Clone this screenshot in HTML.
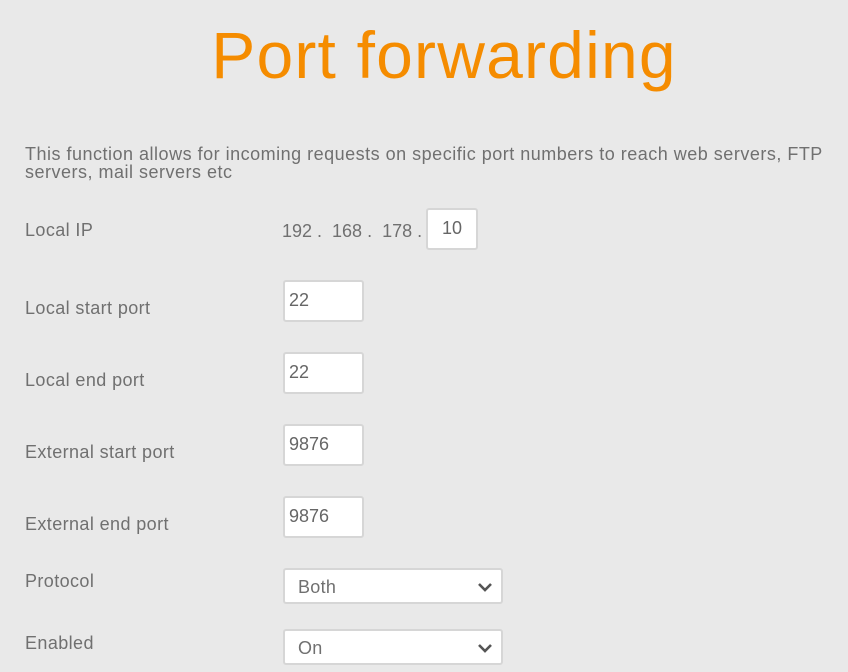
<!DOCTYPE html>
<html><head><meta charset="utf-8"><style>
body{margin:0;width:848px;height:672px;background:#e9e9e9;font-family:"Liberation Sans",sans-serif;color:#707070;position:relative;overflow:hidden}
.a{position:absolute;white-space:nowrap}
h1{position:absolute;left:0;width:888px;top:15px;margin:0;text-align:center;font-weight:normal;font-size:66px;color:#f58c00;line-height:80px;letter-spacing:1.2px}
.d{position:absolute;left:25px;top:145px;width:815px;font-size:18px;line-height:18px;letter-spacing:0.5px}
.l{font-size:18px;letter-spacing:0.4px}
.in{position:absolute;background:#fff;border:2px solid #d6d6d6;border-radius:3px;box-sizing:border-box;font-size:18px;color:#666;padding:8px 0 0 4px}
.sel{position:absolute;background:#fff;border:2px solid #d6d6d6;border-radius:3px;box-sizing:border-box;width:220px;height:36px;left:283px;font-size:18px;padding:7px 0 0 13px;letter-spacing:0.3px}
.sel svg{position:absolute;right:8px;top:12px}
</style></head><body>
<h1>Port forwarding</h1>
<div class="d">This function allows for incoming requests on specific port numbers to reach web servers, FTP servers, mail servers etc</div>
<div class="a l" style="left:25px;top:220px">Local IP</div>
<div class="a l" style="left:282px;top:221px;letter-spacing:0">192 .&nbsp; 168 .&nbsp; 178 .</div>
<div class="in" style="left:426px;top:208px;width:52px;height:42px;padding:8px 0 0 14px">10</div>
<div class="a l" style="left:25px;top:298px">Local start port</div>
<div class="in" style="left:283px;top:280px;width:81px;height:42px">22</div>
<div class="a l" style="left:25px;top:370px">Local end port</div>
<div class="in" style="left:283px;top:352px;width:81px;height:42px">22</div>
<div class="a l" style="left:25px;top:442px">External start port</div>
<div class="in" style="left:283px;top:424px;width:81px;height:42px">9876</div>
<div class="a l" style="left:25px;top:514px">External end port</div>
<div class="in" style="left:283px;top:496px;width:81px;height:42px">9876</div>
<div class="a l" style="left:25px;top:571px">Protocol</div>
<div class="sel" style="top:568px">Both<svg width="16" height="10" viewBox="0 0 16 10"><path d="M2 2 L8 8 L14 2" stroke="#555" stroke-width="2.6" fill="none"/></svg></div>
<div class="a l" style="left:25px;top:633px">Enabled</div>
<div class="sel" style="top:629px">On<svg width="16" height="10" viewBox="0 0 16 10"><path d="M2 2 L8 8 L14 2" stroke="#555" stroke-width="2.6" fill="none"/></svg></div>
</body></html>
